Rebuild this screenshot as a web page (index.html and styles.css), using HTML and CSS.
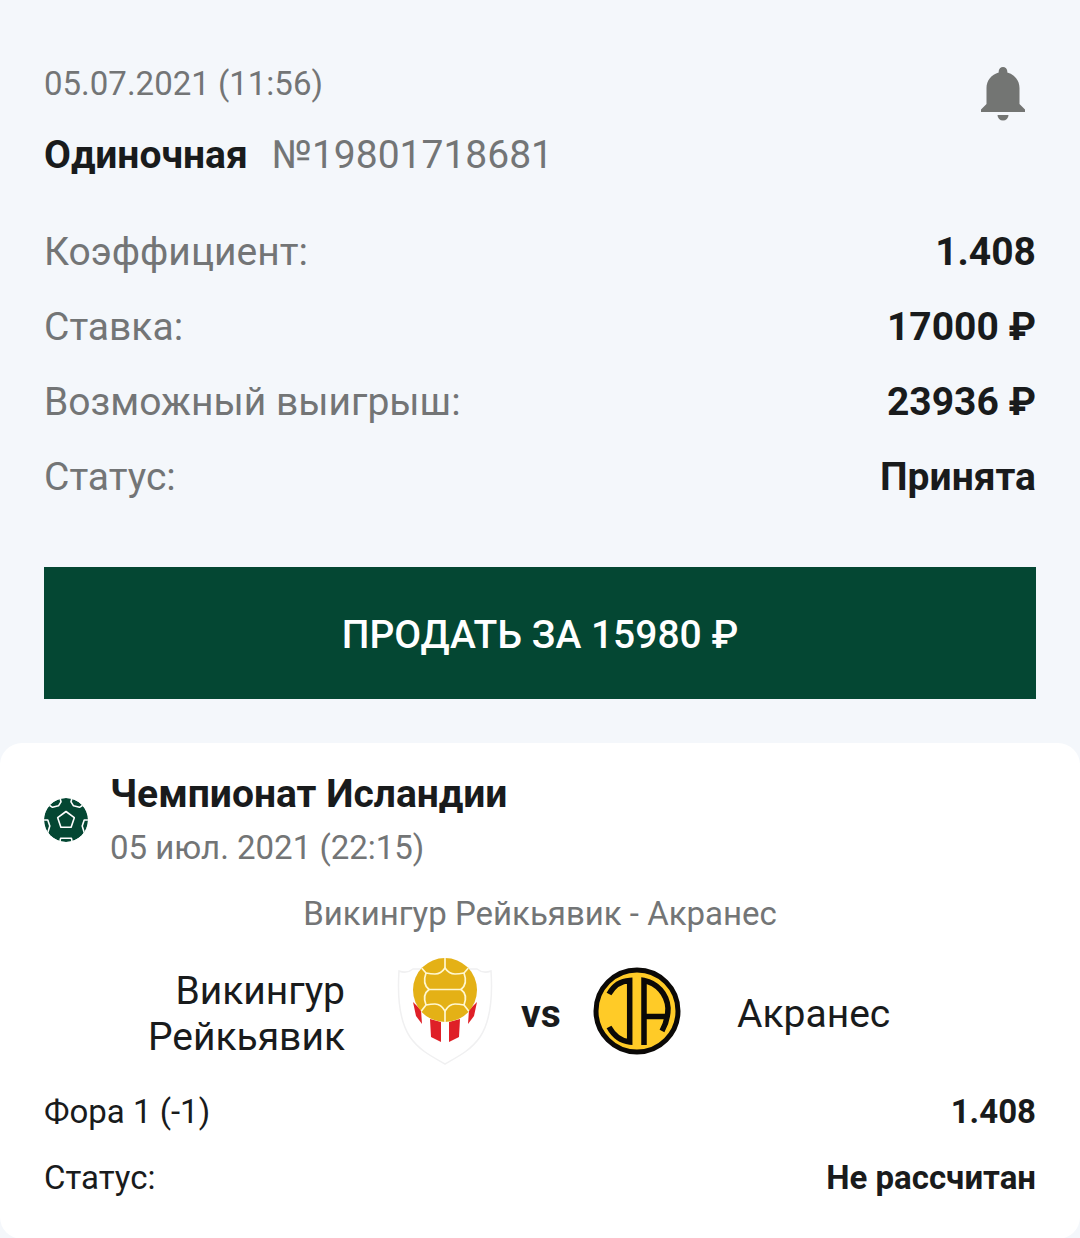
FILE: index.html
```
<!DOCTYPE html>
<html lang="ru">
<head>
<meta charset="utf-8">
<meta name="viewport" content="width=device-width, initial-scale=1">
<title>Одиночная №19801718681</title>
<link rel="stylesheet" href="styles.css">
</head>

<body>
<div class="coupon">
  <div class="coupon-head">
    <div>
      <div class="coupon-date">05.07.2021 (11:56)</div>
      <div class="coupon-title"><h1>Одиночная</h1><span>№19801718681</span></div>
    </div>
    <button class="bell" type="button" aria-label="Уведомления">
      <svg width="44" height="54" viewBox="0 0 44 54">
        <path fill="#737573" d="M22 0a4.300 4.300 0 0 1 4.300 4.300v1.200C33.500 7.500 38.500 13.500 38.500 21v16l5.500 5.500V45H0v-2.500L5.500 37V21C5.500 13.500 10.500 7.500 17.700 5.500V4.300A4.300 4.300 0 0 1 22 0z"/>
        <path fill="#737573" d="M16.500 48h11a5.500 5.500 0 0 1-11 0z"/>
      </svg>
    </button>
  </div>

  <dl class="summary">
    <div class="row"><dt>Коэффициент:</dt><dd>1.408</dd></div>
    <div class="row"><dt>Ставка:</dt><dd>17000 ₽</dd></div>
    <div class="row"><dt>Возможный выигрыш:</dt><dd>23936 ₽</dd></div>
    <div class="row"><dt>Статус:</dt><dd>Принята</dd></div>
  </dl>

  <button class="sell" type="button">ПРОДАТЬ ЗА 15980 ₽</button>
</div>

<div class="event">
  <div class="event-head">
    <svg class="ball" width="44" height="44" viewBox="0 0 44 44">
      <clipPath id="ballClip"><circle cx="22" cy="22" r="22"/></clipPath>
      <g clip-path="url(#ballClip)">
        <circle cx="22" cy="22" r="22" fill="#044733"/>
        <g fill="none" stroke="#fff" stroke-width="1.600" stroke-linejoin="round">
          <path d="M22 13.500l8.300 6.200-3.200 9.500H16.900l-3.200-9.500z"/>
          <path d="M5 7l3.500 2.300 6-1.500 2.500-4L16 0"/>
          <path d="M39 7l-3.500 2.300-6-1.500-2.500-4L28 0"/>
          <path d="M0 22l3.800 0 2 6-2 6.500-3 .5"/>
          <path d="M44 22l-3.800 0-2 6 2 6.500 3 .5"/>
          <path d="M15.800 44l.8-3.800h10.800l.8 3.800"/>
        </g>
      </g>
    </svg>
    <div>
      <h2>Чемпионат Исландии</h2>
      <div class="event-date">05 июл. 2021 (22:15)</div>
    </div>
  </div>

  <div class="event-name">Викингур Рейкьявик - Акранес</div>

  <div class="teams">
    <div class="team home">Викингур Рейкьявик</div>
    <svg class="crest" width="96" height="108" viewBox="0 0 96 108">
      <path fill="#fff" stroke="#f0f0f1" stroke-width="1.500" d="M2 14q8 3 14-2h64q6 5 14 2c2 30-1 51-11 66-9 13-21 19-35 27C34 99 22 93 13 80 3 65 0 44 2 14z"/>
      <path fill="#df2027" d="M16 45l8 8 1 14-6-8zM80 45l-8 8-1 14 6-8zM33 62l11 3v20l-10-5zM63 62l-11 3v20l10-5z"/>
      <clipPath id="crestClip"><circle cx="48" cy="33" r="32"/></clipPath>
      <circle cx="48" cy="33" r="32" fill="#e4b116"/>
      <g clip-path="url(#crestClip)" fill="none" stroke="#fff7cf" stroke-width="1.700">
        <path d="M48 0v11M48 54v12M22 8l7 8M74 8l-7 8M22 57l7-9M74 57l-7-9M32 32.500h32"/>
        <path d="M48 11q-4 6-10 6-4 0-9-1-4 11 3 16.500-7 5-3 15.500 5-1 9-1 6 0 10 7 4-7 10-7 4 0 9 1 4-10.500-3-15.500 7-5.500 3-16.500-5 1-9 1-6 0-10-6z"/>
      </g>
    </svg>
    <div class="vs">vs</div>
    <svg class="crest" width="88" height="88" viewBox="0 0 88 88">
      <circle cx="44" cy="44" r="41" fill="#ffcb27" stroke="#0b0907" stroke-width="5"/>
      <g fill="none" stroke="#0b0907" stroke-width="5.500">
        <path d="M16 27C21 18 27 14 36.700 13.500V75C27 74 21 69 16 60"/>
        <path d="M51 78V13.500C64 16 74 27 75 41c0 9-2 16-6 23M51 49.500h23"/>
      </g>
    </svg>
    <div class="team">Акранес</div>
  </div>

  <dl class="outcome">
    <div class="row"><dt>Фора 1 (-1)</dt><dd>1.408</dd></div>
    <div class="row"><dt>Статус:</dt><dd>Не рассчитан</dd></div>
  </dl>
</div>
</body>
</html>
```

FILE: styles.css
```
* {
  box-sizing: border-box;
}

body {
  margin: 0;
  background: #f4f7fb;
  color: #191b1c;
  font-family: Roboto, sans-serif;
  font-size: 33px;
  line-height: 44px;
}

h1, h2, dl, dd {
  margin: 0;
}

h1, h2 {
  font-size: 39px;
  font-weight: bold;
}

button {
  border: 0;
  font-family: inherit;
  cursor: pointer;
}

.coupon {
  padding: 62px 44px 44px;
}

.coupon-head {
  display: flex;
  justify-content: space-between;
  align-items: flex-start;
}

.coupon-date,
.event-date,
.event-name {
  color: #737576;
}

.coupon-title {
  display: flex;
  flex-wrap: wrap;
  gap: 0 24px;
  margin-top: 22px;
  font-size: 39px;
  line-height: 54px;
}

.coupon-title span {
  color: #737576;
}

.bell {
  margin: 5px 11px 0 0;
  padding: 0;
  background: none;
}

.bell svg,
.ball,
.crest {
  display: block;
  flex: none;
}

.ball {
  margin-top: 3px;
}

.row {
  display: flex;
  justify-content: space-between;
  gap: 22px;
}

dd {
  font-weight: bold;
  text-align: right;
}

.summary {
  display: grid;
  gap: 21px;
  margin: 43px 0 63px;
  font-size: 39px;
  line-height: 54px;
}

.summary dt {
  color: #737576;
}

.sell {
  display: block;
  width: 100%;
  padding: 46px 22px 42px;
  background: #044733;
  color: #fff;
  font-size: 39px;
  font-weight: 500;
  line-height: 44px;
}

.event {
  padding: 24px 44px 39px;
  border-radius: 22px;
  background: #fff;
}

.event-head {
  display: flex;
  align-items: center;
  gap: 22px;
}

.event-head h2 {
  line-height: 54px;
}

.event-date {
  margin-top: 5px;
}

.event-name {
  margin: 22px 0 21px;
  text-align: center;
}

.teams {
  display: grid;
  grid-template-columns: 1fr 96px 40px 96px 1fr;
  justify-items: center;
  align-items: center;
  gap: 28px;
  padding-left: 2px;
  font-size: 39px;
  line-height: 46px;
}

.team {
  justify-self: start;
  padding: 6px 24px 0;
}

.team.home {
  justify-self: end;
  text-align: right;
}

.vs {
  padding-top: 6px;
  font-weight: bold;
}

.outcome {
  display: grid;
  gap: 22px;
  margin-top: 25px;
}
```
